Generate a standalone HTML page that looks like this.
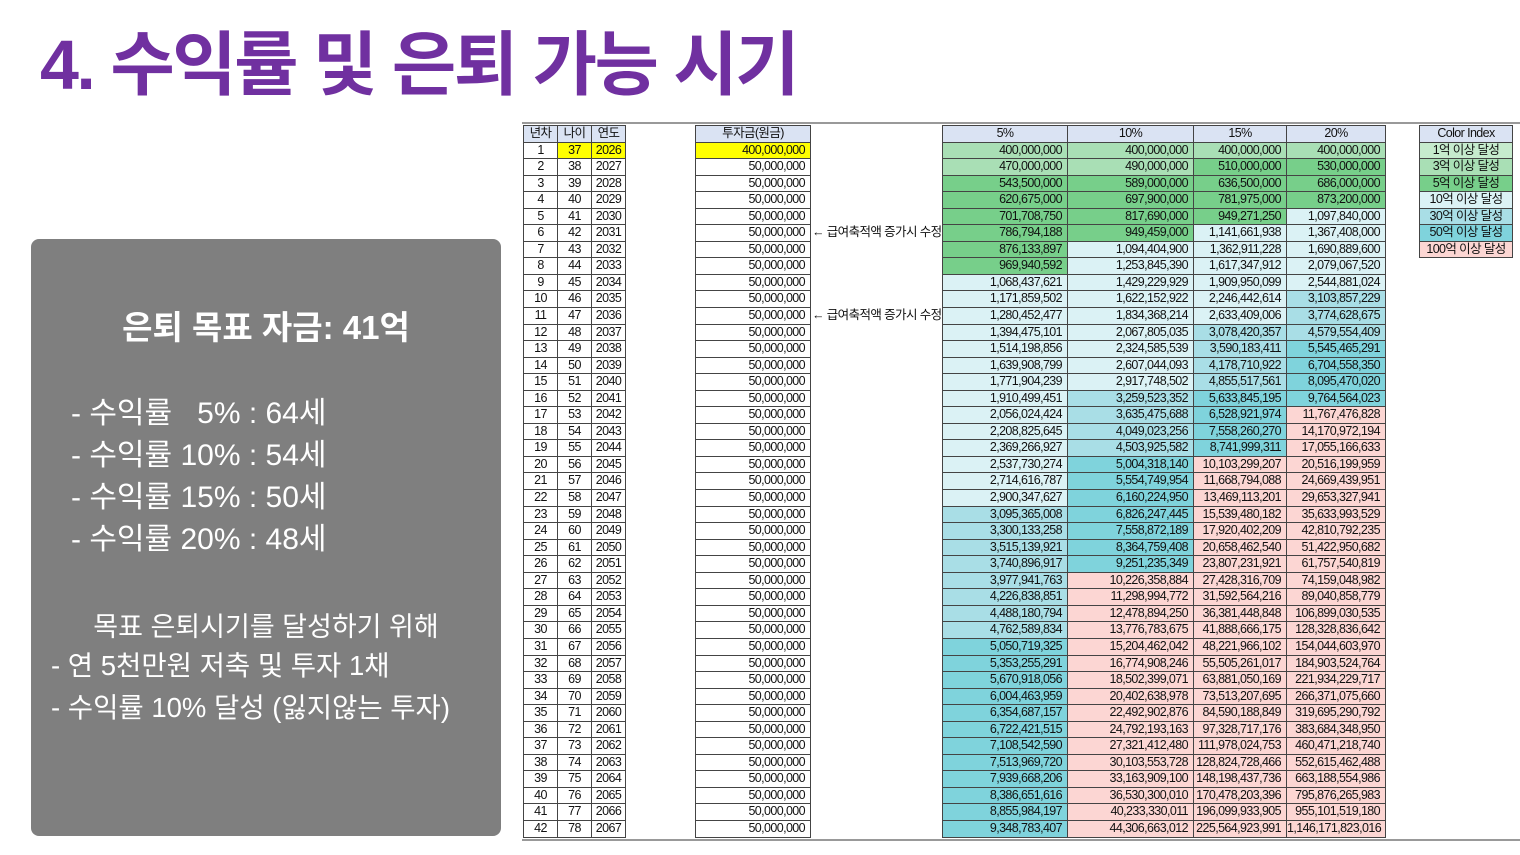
<!DOCTYPE html>
<html><head><meta charset="utf-8">
<style>
*{box-sizing:border-box;margin:0;padding:0}
body{width:1520px;height:855px;background:#fff;position:relative;overflow:hidden;font-family:"Liberation Sans","Noto Sans CJK KR",sans-serif}
.title{position:absolute;left:40px;top:22px;font-size:70px;font-weight:bold;color:#7030a0;letter-spacing:-2.5px;white-space:nowrap;line-height:86px}
.box{position:absolute;left:31px;top:239px;width:470px;height:597px;background:#7f7f7f;border-radius:8px;color:#fff}
.box div{position:absolute;white-space:nowrap}
.g{position:absolute;display:grid;border-top:1px solid #444;border-left:1px solid #444;font-size:12.5px;letter-spacing:-0.6px;color:#111;grid-auto-rows:16.55px}
.g p{border-right:1px solid #444;border-bottom:1px solid #444;line-height:15px;white-space:nowrap;overflow:hidden}
.c p{text-align:center}
.r p{text-align:right;padding-right:5px}
.h{background:#dae3f3;text-align:center!important;padding-right:0!important}
.y{background:#ffff00}
.a{background:#a9dfb5}.b{background:#77cf8a}.c1{background:#dbf2f5}.d{background:#a9dee6}.e{background:#7fd3dc}.f{background:#fcd6d3}
.note{position:absolute;left:812px;font-size:12.5px;letter-spacing:-0.6px;white-space:nowrap;width:130px;overflow:hidden;color:#111;line-height:16px}
</style></head><body>
<div class="title">4. 수익률 및 은퇴 가능 시기</div>
<div class="box">
<div style="left:0;width:470px;text-align:center;top:62px;font-size:33px;font-weight:bold">은퇴 목표 자금: 41억</div>
<div style="left:40px;top:154px;font-size:30px;line-height:42px">- 수익률 &nbsp;&nbsp;5% : 64세<br>- 수익률 10% : 54세<br>- 수익률 15% : 50세<br>- 수익률 20% : 48세</div>
<div style="left:0;width:470px;text-align:center;top:366px;font-size:27px">목표 은퇴시기를 달성하기 위해</div>
<div style="left:20px;top:406px;font-size:27.5px;line-height:42px">- 연 5천만원 저축 및 투자 1채<br>- 수익률 10% 달성 (잃지않는 투자)</div>
</div>
<div style="position:absolute;left:522px;top:122px;width:998px;height:2px;background:#999"></div>
<div style="position:absolute;left:522px;top:839px;width:998px;height:2px;background:#999"></div>

<div class="g c" style="left:523px;top:125px;grid-template-columns:34px 34px 34px">
<p class="h">년차</p><p class="h">나이</p><p class="h">연도</p>
<p>1</p><p class="y">37</p><p class="y">2026</p>
<p>2</p><p>38</p><p>2027</p><p>3</p><p>39</p><p>2028</p><p>4</p><p>40</p><p>2029</p><p>5</p><p>41</p><p>2030</p>
<p>6</p><p>42</p><p>2031</p><p>7</p><p>43</p><p>2032</p><p>8</p><p>44</p><p>2033</p><p>9</p><p>45</p><p>2034</p>
<p>10</p><p>46</p><p>2035</p><p>11</p><p>47</p><p>2036</p><p>12</p><p>48</p><p>2037</p><p>13</p><p>49</p><p>2038</p>
<p>14</p><p>50</p><p>2039</p><p>15</p><p>51</p><p>2040</p><p>16</p><p>52</p><p>2041</p><p>17</p><p>53</p><p>2042</p>
<p>18</p><p>54</p><p>2043</p><p>19</p><p>55</p><p>2044</p><p>20</p><p>56</p><p>2045</p><p>21</p><p>57</p><p>2046</p>
<p>22</p><p>58</p><p>2047</p><p>23</p><p>59</p><p>2048</p><p>24</p><p>60</p><p>2049</p><p>25</p><p>61</p><p>2050</p>
<p>26</p><p>62</p><p>2051</p><p>27</p><p>63</p><p>2052</p><p>28</p><p>64</p><p>2053</p><p>29</p><p>65</p><p>2054</p>
<p>30</p><p>66</p><p>2055</p><p>31</p><p>67</p><p>2056</p><p>32</p><p>68</p><p>2057</p><p>33</p><p>69</p><p>2058</p>
<p>34</p><p>70</p><p>2059</p><p>35</p><p>71</p><p>2060</p><p>36</p><p>72</p><p>2061</p><p>37</p><p>73</p><p>2062</p>
<p>38</p><p>74</p><p>2063</p><p>39</p><p>75</p><p>2064</p><p>40</p><p>76</p><p>2065</p><p>41</p><p>77</p><p>2066</p>
<p>42</p><p>78</p><p>2067</p>
</div>

<div class="g r" style="left:695px;top:125px;grid-template-columns:115px">
<p class="h">투자금(원금)</p><p class="y">400,000,000</p>
<p>50,000,000</p><p>50,000,000</p><p>50,000,000</p><p>50,000,000</p><p>50,000,000</p><p>50,000,000</p><p>50,000,000</p>
<p>50,000,000</p><p>50,000,000</p><p>50,000,000</p><p>50,000,000</p><p>50,000,000</p><p>50,000,000</p><p>50,000,000</p>
<p>50,000,000</p><p>50,000,000</p><p>50,000,000</p><p>50,000,000</p><p>50,000,000</p><p>50,000,000</p><p>50,000,000</p>
<p>50,000,000</p><p>50,000,000</p><p>50,000,000</p><p>50,000,000</p><p>50,000,000</p><p>50,000,000</p><p>50,000,000</p>
<p>50,000,000</p><p>50,000,000</p><p>50,000,000</p><p>50,000,000</p><p>50,000,000</p><p>50,000,000</p><p>50,000,000</p>
<p>50,000,000</p><p>50,000,000</p><p>50,000,000</p><p>50,000,000</p><p>50,000,000</p><p>50,000,000</p>
</div>
<div class="note" style="top:224px">← 급여축적액 증가시 수정</div>
<div class="note" style="top:307px">← 급여축적액 증가시 수정</div>

<div class="g r" style="left:942px;top:125px;grid-template-columns:125px 126px 93px 99px">
<p class="h">5%</p><p class="h">10%</p><p class="h">15%</p><p class="h">20%</p>
<p class="a">400,000,000</p><p class="a">400,000,000</p><p class="a">400,000,000</p><p class="a">400,000,000</p>
<p class="a">470,000,000</p><p class="a">490,000,000</p><p class="b">510,000,000</p><p class="b">530,000,000</p>
<p class="b">543,500,000</p><p class="b">589,000,000</p><p class="b">636,500,000</p><p class="b">686,000,000</p>
<p class="b">620,675,000</p><p class="b">697,900,000</p><p class="b">781,975,000</p><p class="b">873,200,000</p>
<p class="b">701,708,750</p><p class="b">817,690,000</p><p class="b">949,271,250</p><p class="c1">1,097,840,000</p>
<p class="b">786,794,188</p><p class="b">949,459,000</p><p class="c1">1,141,661,938</p><p class="c1">1,367,408,000</p>
<p class="b">876,133,897</p><p class="c1">1,094,404,900</p><p class="c1">1,362,911,228</p><p class="c1">1,690,889,600</p>
<p class="b">969,940,592</p><p class="c1">1,253,845,390</p><p class="c1">1,617,347,912</p><p class="c1">2,079,067,520</p>
<p class="c1">1,068,437,621</p><p class="c1">1,429,229,929</p><p class="c1">1,909,950,099</p><p class="c1">2,544,881,024</p>
<p class="c1">1,171,859,502</p><p class="c1">1,622,152,922</p><p class="c1">2,246,442,614</p><p class="d">3,103,857,229</p>
<p class="c1">1,280,452,477</p><p class="c1">1,834,368,214</p><p class="c1">2,633,409,006</p><p class="d">3,774,628,675</p>
<p class="c1">1,394,475,101</p><p class="c1">2,067,805,035</p><p class="d">3,078,420,357</p><p class="d">4,579,554,409</p>
<p class="c1">1,514,198,856</p><p class="c1">2,324,585,539</p><p class="d">3,590,183,411</p><p class="e">5,545,465,291</p>
<p class="c1">1,639,908,799</p><p class="c1">2,607,044,093</p><p class="d">4,178,710,922</p><p class="e">6,704,558,350</p>
<p class="c1">1,771,904,239</p><p class="c1">2,917,748,502</p><p class="d">4,855,517,561</p><p class="e">8,095,470,020</p>
<p class="c1">1,910,499,451</p><p class="d">3,259,523,352</p><p class="e">5,633,845,195</p><p class="e">9,764,564,023</p>
<p class="c1">2,056,024,424</p><p class="d">3,635,475,688</p><p class="e">6,528,921,974</p><p class="f">11,767,476,828</p>
<p class="c1">2,208,825,645</p><p class="d">4,049,023,256</p><p class="e">7,558,260,270</p><p class="f">14,170,972,194</p>
<p class="c1">2,369,266,927</p><p class="d">4,503,925,582</p><p class="e">8,741,999,311</p><p class="f">17,055,166,633</p>
<p class="c1">2,537,730,274</p><p class="e">5,004,318,140</p><p class="f">10,103,299,207</p><p class="f">20,516,199,959</p>
<p class="c1">2,714,616,787</p><p class="e">5,554,749,954</p><p class="f">11,668,794,088</p><p class="f">24,669,439,951</p>
<p class="c1">2,900,347,627</p><p class="e">6,160,224,950</p><p class="f">13,469,113,201</p><p class="f">29,653,327,941</p>
<p class="d">3,095,365,008</p><p class="e">6,826,247,445</p><p class="f">15,539,480,182</p><p class="f">35,633,993,529</p>
<p class="d">3,300,133,258</p><p class="e">7,558,872,189</p><p class="f">17,920,402,209</p><p class="f">42,810,792,235</p>
<p class="d">3,515,139,921</p><p class="e">8,364,759,408</p><p class="f">20,658,462,540</p><p class="f">51,422,950,682</p>
<p class="d">3,740,896,917</p><p class="e">9,251,235,349</p><p class="f">23,807,231,921</p><p class="f">61,757,540,819</p>
<p class="d">3,977,941,763</p><p class="f">10,226,358,884</p><p class="f">27,428,316,709</p><p class="f">74,159,048,982</p>
<p class="d">4,226,838,851</p><p class="f">11,298,994,772</p><p class="f">31,592,564,216</p><p class="f">89,040,858,779</p>
<p class="d">4,488,180,794</p><p class="f">12,478,894,250</p><p class="f">36,381,448,848</p><p class="f">106,899,030,535</p>
<p class="d">4,762,589,834</p><p class="f">13,776,783,675</p><p class="f">41,888,666,175</p><p class="f">128,328,836,642</p>
<p class="e">5,050,719,325</p><p class="f">15,204,462,042</p><p class="f">48,221,966,102</p><p class="f">154,044,603,970</p>
<p class="e">5,353,255,291</p><p class="f">16,774,908,246</p><p class="f">55,505,261,017</p><p class="f">184,903,524,764</p>
<p class="e">5,670,918,056</p><p class="f">18,502,399,071</p><p class="f">63,881,050,169</p><p class="f">221,934,229,717</p>
<p class="e">6,004,463,959</p><p class="f">20,402,638,978</p><p class="f">73,513,207,695</p><p class="f">266,371,075,660</p>
<p class="e">6,354,687,157</p><p class="f">22,492,902,876</p><p class="f">84,590,188,849</p><p class="f">319,695,290,792</p>
<p class="e">6,722,421,515</p><p class="f">24,792,193,163</p><p class="f">97,328,717,176</p><p class="f">383,684,348,950</p>
<p class="e">7,108,542,590</p><p class="f">27,321,412,480</p><p class="f">111,978,024,753</p><p class="f">460,471,218,740</p>
<p class="e">7,513,969,720</p><p class="f">30,103,553,728</p><p class="f">128,824,728,466</p><p class="f">552,615,462,488</p>
<p class="e">7,939,668,206</p><p class="f">33,163,909,100</p><p class="f">148,198,437,736</p><p class="f">663,188,554,986</p>
<p class="e">8,386,651,616</p><p class="f">36,530,300,010</p><p class="f">170,478,203,396</p><p class="f">795,876,265,983</p>
<p class="e">8,855,984,197</p><p class="f">40,233,330,011</p><p class="f">196,099,933,905</p><p class="f">955,101,519,180</p>
<p class="e">9,348,783,407</p><p class="f">44,306,663,012</p><p class="f">225,564,923,991</p><p class="f">1,146,171,823,016</p>
</div>

<div class="g c" style="left:1419px;top:125px;grid-template-columns:93px">
<p class="h">Color Index</p><p style="background:#c6ebcd">1억 이상 달성</p><p class="a">3억 이상 달성</p><p class="b">5억 이상 달성</p>
<p class="c1">10억 이상 달성</p><p class="d">30억 이상 달성</p><p class="e">50억 이상 달성</p><p class="f">100억 이상 달성</p>
</div>
</body></html>
